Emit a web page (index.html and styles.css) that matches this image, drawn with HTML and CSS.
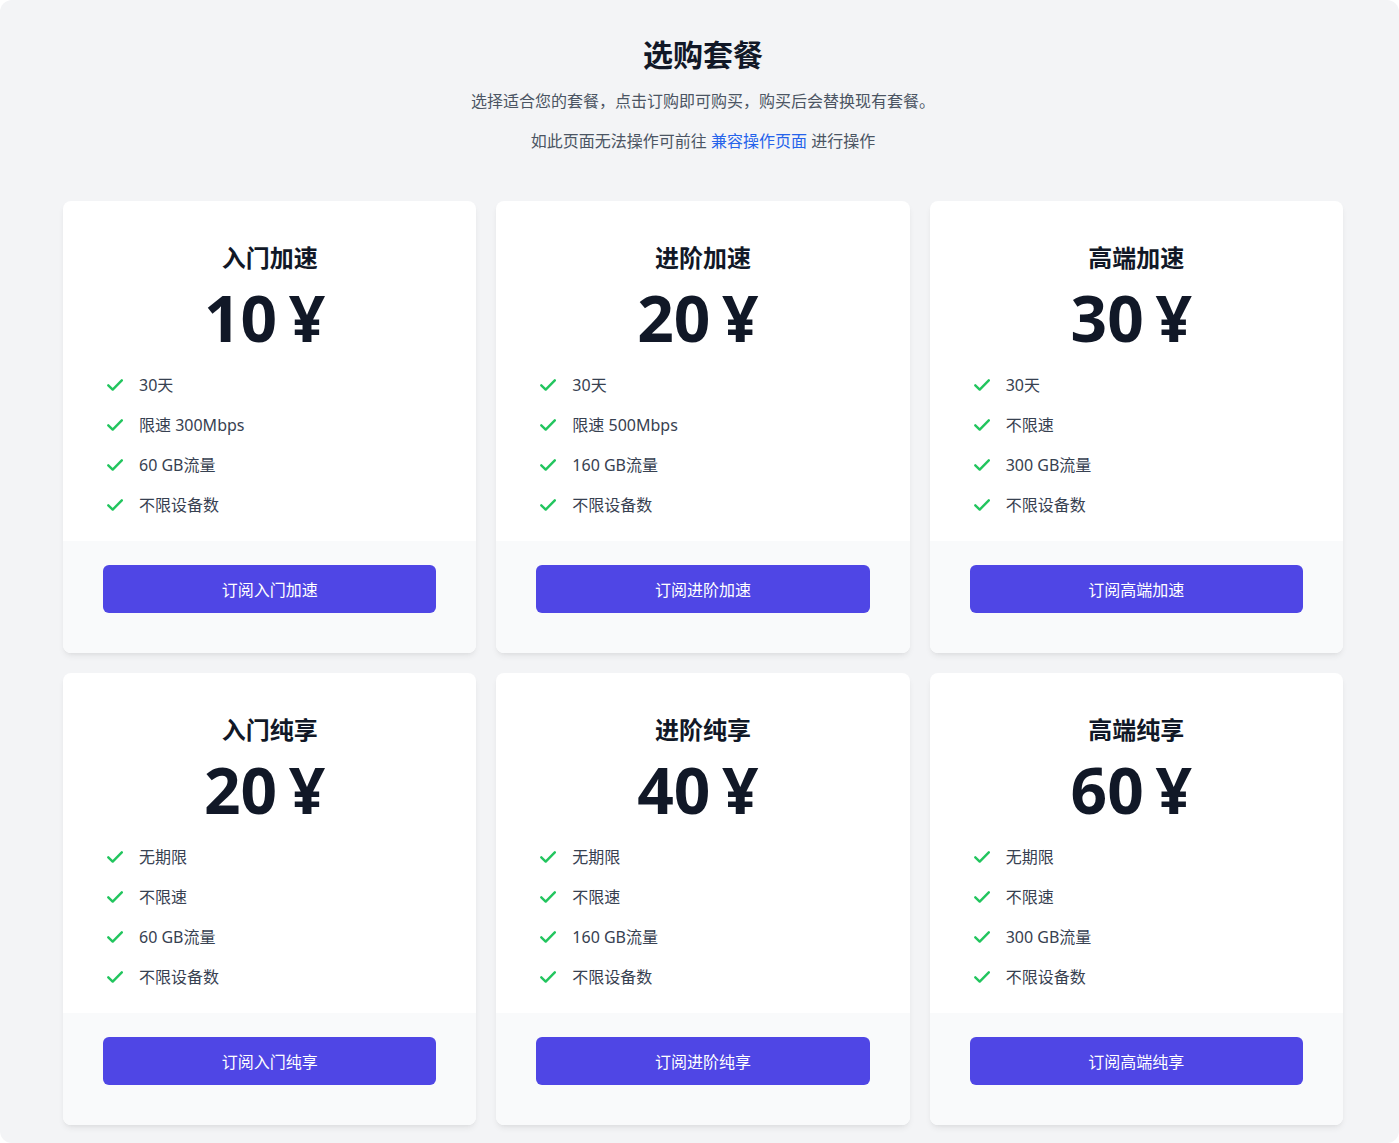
FILE: index.html
```html
<!DOCTYPE html>
<html lang="zh-CN">
<head>
<meta charset="utf-8">
<title>选购套餐</title>
<link rel="stylesheet" href="styles.css">
</head>
<body>
<div class="page">
  <header class="intro">
    <h1 class="intro-title">选购套餐</h1>
    <p class="intro-text">选择适合您的套餐，点击订购即可购买，购买后会替换现有套餐。</p>
    <p class="intro-text">如此页面无法操作可前往 <a class="intro-link" href="#">兼容操作页面</a> 进行操作</p>
  </header>
  <main class="plans">
    <section class="plan">
      <div class="plan-body">
        <h2 class="plan-name">入门加速</h2>
        <div class="plan-price">10 ¥</div>
        <ul class="features">
          <li class="feature"><svg class="check" viewBox="0 0 16 12"><path d="M1.3 6.3l4.4 4.3L14.8 1.3"/></svg><span>30天</span></li>
          <li class="feature"><svg class="check" viewBox="0 0 16 12"><path d="M1.3 6.3l4.4 4.3L14.8 1.3"/></svg><span>限速 300Mbps</span></li>
          <li class="feature"><svg class="check" viewBox="0 0 16 12"><path d="M1.3 6.3l4.4 4.3L14.8 1.3"/></svg><span>60 GB流量</span></li>
          <li class="feature"><svg class="check" viewBox="0 0 16 12"><path d="M1.3 6.3l4.4 4.3L14.8 1.3"/></svg><span>不限设备数</span></li>
        </ul>
      </div>
      <div class="plan-footer"><button class="buy">订阅入门加速</button></div>
    </section>
    <section class="plan">
      <div class="plan-body">
        <h2 class="plan-name">进阶加速</h2>
        <div class="plan-price">20 ¥</div>
        <ul class="features">
          <li class="feature"><svg class="check" viewBox="0 0 16 12"><path d="M1.3 6.3l4.4 4.3L14.8 1.3"/></svg><span>30天</span></li>
          <li class="feature"><svg class="check" viewBox="0 0 16 12"><path d="M1.3 6.3l4.4 4.3L14.8 1.3"/></svg><span>限速 500Mbps</span></li>
          <li class="feature"><svg class="check" viewBox="0 0 16 12"><path d="M1.3 6.3l4.4 4.3L14.8 1.3"/></svg><span>160 GB流量</span></li>
          <li class="feature"><svg class="check" viewBox="0 0 16 12"><path d="M1.3 6.3l4.4 4.3L14.8 1.3"/></svg><span>不限设备数</span></li>
        </ul>
      </div>
      <div class="plan-footer"><button class="buy">订阅进阶加速</button></div>
    </section>
    <section class="plan">
      <div class="plan-body">
        <h2 class="plan-name">高端加速</h2>
        <div class="plan-price">30 ¥</div>
        <ul class="features">
          <li class="feature"><svg class="check" viewBox="0 0 16 12"><path d="M1.3 6.3l4.4 4.3L14.8 1.3"/></svg><span>30天</span></li>
          <li class="feature"><svg class="check" viewBox="0 0 16 12"><path d="M1.3 6.3l4.4 4.3L14.8 1.3"/></svg><span>不限速</span></li>
          <li class="feature"><svg class="check" viewBox="0 0 16 12"><path d="M1.3 6.3l4.4 4.3L14.8 1.3"/></svg><span>300 GB流量</span></li>
          <li class="feature"><svg class="check" viewBox="0 0 16 12"><path d="M1.3 6.3l4.4 4.3L14.8 1.3"/></svg><span>不限设备数</span></li>
        </ul>
      </div>
      <div class="plan-footer"><button class="buy">订阅高端加速</button></div>
    </section>
    <section class="plan">
      <div class="plan-body">
        <h2 class="plan-name">入门纯享</h2>
        <div class="plan-price">20 ¥</div>
        <ul class="features">
          <li class="feature"><svg class="check" viewBox="0 0 16 12"><path d="M1.3 6.3l4.4 4.3L14.8 1.3"/></svg><span>无期限</span></li>
          <li class="feature"><svg class="check" viewBox="0 0 16 12"><path d="M1.3 6.3l4.4 4.3L14.8 1.3"/></svg><span>不限速</span></li>
          <li class="feature"><svg class="check" viewBox="0 0 16 12"><path d="M1.3 6.3l4.4 4.3L14.8 1.3"/></svg><span>60 GB流量</span></li>
          <li class="feature"><svg class="check" viewBox="0 0 16 12"><path d="M1.3 6.3l4.4 4.3L14.8 1.3"/></svg><span>不限设备数</span></li>
        </ul>
      </div>
      <div class="plan-footer"><button class="buy">订阅入门纯享</button></div>
    </section>
    <section class="plan">
      <div class="plan-body">
        <h2 class="plan-name">进阶纯享</h2>
        <div class="plan-price">40 ¥</div>
        <ul class="features">
          <li class="feature"><svg class="check" viewBox="0 0 16 12"><path d="M1.3 6.3l4.4 4.3L14.8 1.3"/></svg><span>无期限</span></li>
          <li class="feature"><svg class="check" viewBox="0 0 16 12"><path d="M1.3 6.3l4.4 4.3L14.8 1.3"/></svg><span>不限速</span></li>
          <li class="feature"><svg class="check" viewBox="0 0 16 12"><path d="M1.3 6.3l4.4 4.3L14.8 1.3"/></svg><span>160 GB流量</span></li>
          <li class="feature"><svg class="check" viewBox="0 0 16 12"><path d="M1.3 6.3l4.4 4.3L14.8 1.3"/></svg><span>不限设备数</span></li>
        </ul>
      </div>
      <div class="plan-footer"><button class="buy">订阅进阶纯享</button></div>
    </section>
    <section class="plan">
      <div class="plan-body">
        <h2 class="plan-name">高端纯享</h2>
        <div class="plan-price">60 ¥</div>
        <ul class="features">
          <li class="feature"><svg class="check" viewBox="0 0 16 12"><path d="M1.3 6.3l4.4 4.3L14.8 1.3"/></svg><span>无期限</span></li>
          <li class="feature"><svg class="check" viewBox="0 0 16 12"><path d="M1.3 6.3l4.4 4.3L14.8 1.3"/></svg><span>不限速</span></li>
          <li class="feature"><svg class="check" viewBox="0 0 16 12"><path d="M1.3 6.3l4.4 4.3L14.8 1.3"/></svg><span>300 GB流量</span></li>
          <li class="feature"><svg class="check" viewBox="0 0 16 12"><path d="M1.3 6.3l4.4 4.3L14.8 1.3"/></svg><span>不限设备数</span></li>
        </ul>
      </div>
      <div class="plan-footer"><button class="buy">订阅高端纯享</button></div>
    </section>
  </main>
</div>
</body>
</html>
```

FILE: styles.css
```css
* { box-sizing: border-box; }
html, body { margin: 0; padding: 0; background: #ffffff; }
body {
  font-family: "Noto Sans", "Noto Sans CJK SC", sans-serif;
  color: #111827;
}
.page {
  background: #f3f4f6;
  border-radius: 12px;
  min-height: 1143px;
  padding: 37px 56px 18px 63px;
}
.intro { text-align: center; }
.intro-title {
  margin: 0;
  font-size: 30px;
  line-height: 36px;
  font-weight: 700;
  color: #111827;
}
.intro-text {
  margin: 16px 0 0;
  font-size: 16px;
  line-height: 24px;
  color: #4b5563;
}
.intro-link { color: #2563eb; text-decoration: none; }
.plans {
  margin-top: 48px;
  display: grid;
  grid-template-columns: repeat(3, 1fr);
  gap: 20px;
}
.plan {
  background: #ffffff;
  border-radius: 8px;
  overflow: hidden;
  box-shadow: 0 4px 6px -1px rgba(0,0,0,0.07), 0 2px 4px -2px rgba(0,0,0,0.05);
  display: flex;
  flex-direction: column;
}
.plan-body { padding: 40px 40px 24px; }
.plan-name {
  margin: 0;
  text-align: center;
  font-size: 24px;
  line-height: 34px;
  font-weight: 700;
  color: #111827;
}
.plan-price {
  margin-top: 11px;
  padding-right: 10px;
  text-align: center;
  font-size: 64px;
  line-height: 64px;
  font-weight: 700;
  word-spacing: -5px;
  color: #111827;
}
.features {
  list-style: none;
  margin: 23px 0 0;
  padding: 0 0 0 4px;
  display: flex;
  flex-direction: column;
  gap: 16px;
}
.feature {
  display: flex;
  align-items: center;
  gap: 16px;
  font-size: 16px;
  line-height: 24px;
  color: #374151;
}
.check {
  width: 16px;
  height: 12px;
  flex: none;
  fill: none;
  stroke: #22c55e;
  stroke-width: 2.4;
  stroke-linecap: round;
  stroke-linejoin: round;
}
.plan-footer {
  background: #f9fafb;
  padding: 24px 40px 40px;
}
.buy {
  display: block;
  width: 100%;
  height: 48px;
  border: 0;
  border-radius: 6px;
  background: #4f46e5;
  color: #ffffff;
  font-family: "Noto Sans", "Noto Sans CJK SC", sans-serif;
  font-size: 16px;
  cursor: pointer;
}
```
